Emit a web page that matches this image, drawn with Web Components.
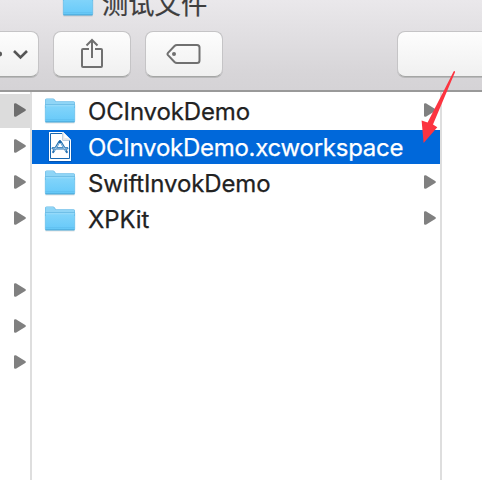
<!DOCTYPE html>
<html lang="zh-CN"><head><meta charset="utf-8"><title>Finder</title>
<style>html,body{margin:0;width:482px;height:480px;overflow:hidden;background:#fff}</style></head>
<body><finder-window></finder-window>
<script>
function define(name, html){
  const t=document.createElement('template');t.innerHTML=html;
  customElements.define(name,class extends HTMLElement{
    constructor(){super();this.attachShadow({mode:'open'}).append(t.content.cloneNode(true));}
  });
}
define('disclosure-arrow',`<style>:host{display:block;width:12px;height:14px;color:#808080}svg{display:block}</style>
<svg width="12" height="14" viewBox="0 0 12 14"><path fill="currentColor" d="M0 1.2Q0 0 1.5.2Q2.2.4 3.5 1.3L11.2 6Q12.6 7 11.2 8L3.5 12.7Q2.2 13.6 1.5 13.8Q0 14 0 12.8Z"/></svg>`);
define('folder-icon',`<style>:host{display:block;width:32px;height:26px}svg{display:block}</style>
<svg width="32" height="26" viewBox="0 0 32 26"><defs><linearGradient id="g" x2="0" y2="1"><stop stop-color="#84d5fa"/><stop offset="1" stop-color="#66c9f9"/></linearGradient></defs>
<path d="M1.5 24.9H30.5" stroke="#000" stroke-opacity=".15"/>
<path d="M1 2Q1 .4 2.6.4H9Q10 .4 10.7 1.4L12 3.2H29.5Q31 3.2 31 4.8V10H1Z" fill="#6dbbe6"/>
<path d="M1.6 2.2Q1.6 1 2.8 1H8.8Q9.6 1 10.2 1.9L11.6 3.8H29.4Q30.4 3.8 30.4 5V8H1.6Z" fill="#8fd5f6"/>
<path d="M1.3 6.9H30.7V23Q30.7 24 30 24H2Q1.3 24 1.3 23Z" fill="url(#g)" stroke="#58b5e4" stroke-width=".6"/><path d="M1.2 6.8H30.8" stroke="#68b9e2" stroke-width=".8"/><path d="M1.5 7.7H30.5" stroke="#a6e2fc" stroke-width=".8"/><path d="M1.5 21.7H30.5" stroke="#5dbbec" stroke-width=".7"/><path d="M1.3 23.9H30.7" stroke="#459fcf" stroke-width=".8"/></svg>`);
define('workspace-icon',`<style>:host{display:block;width:32px;height:32px}svg{display:block}</style>
<svg width="32" height="32" viewBox="0 0 32 32"><path d="M4.5 2H19.5L27.5 10V31H4.5Z" fill="#0b3f83" opacity=".5"/><path d="M5 1H19L27 9V30H5Z" fill="#fff"/>
<path d="M6.5 2.5H18.6V9H25.5V27.5H6.5Z" fill="none" stroke="#1767b1"/><path d="M18.2 1H19L27 9V9.4H18.2Z" fill="#e8e8e8"/><path d="M19 1Q21 4.4 20.4 7.3Q24 6.5 27 9Z" fill="#fff"/>
<g fill="none" stroke="#2873b2" stroke-linecap="round"><path d="M15.3 10.8L9.2 21M16.7 10.8L22.8 21" stroke-width="2.2"/><path d="M9 17.2H23" stroke-width="2.6"/></g><g fill="none" stroke="#b9d9f0" stroke-width=".8"><path d="M15 12L10 20M17 12L22 20M8.6 17.2H23.4"/></g><path d="M16 9V12" stroke="#1d65a6" stroke-width="1.5"/></svg>`);
define('tool-button',`<style>:host{display:flex;box-sizing:border-box;width:78px;height:46px;border:1px solid #c5c4c6;border-bottom-color:#a5a6a5;border-radius:8px;background:linear-gradient(#fdfdfd,#f0f0f0);box-shadow:0 1px 0 #b9b9ba;align-items:center;justify-content:center;flex:none}::slotted(svg){display:block}</style><slot></slot>`);
define('window-toolbar',`<style>:host{display:block;height:92px;box-sizing:border-box;overflow:hidden;background:linear-gradient(#eae8eb,#d7d5d8 82%,#d5d3d6);border-bottom:2px solid #999}
.title{display:flex;height:31px;padding-left:62px}.title folder-icon{margin-top:-9px}.title span{margin:-13px 0 0 8px;font:26.3px/32px "Noto Sans CJK SC",sans-serif;color:#3e3e3e;-webkit-text-stroke:.2px}
.tools{display:flex;gap:14px}.back{width:79px;margin-left:-40px}.search{width:100px;margin-left:160px}
</style><div class="title"><folder-icon></folder-icon><span>测试文件</span></div><div class="tools">
<tool-button class="back"><svg width="77" height="44" viewBox="0 0 77 44"><circle cx="38.7" cy="22" r="2.4" fill="#5a5a5a"/><path d="M53 19L59.5 25.5L66 19" fill="none" stroke="#555" stroke-width="2.6"/></svg></tool-button>
<tool-button><svg width="24" height="32" viewBox="0 0 24 32" fill="none" stroke="#707070" stroke-width="2"><path d="M9 11H3Q2 11 2 12V28Q2 29 3 29H21Q22 29 22 28V12Q22 11 21 11H15M12 20V1.5M6.5 7.5L12 2L17.5 7.5"/></svg></tool-button>
<tool-button><svg width="36" height="22" viewBox="0 0 36 22" fill="none" stroke="#707070" stroke-width="2"><path d="M11 2H31Q33.5 2 33.5 4.5V17.5Q33.5 20 31 20H11Q9.5 20 8.5 19L2 12.2Q1 11 2 9.8L8.5 3Q9.5 2 11 2Z"/><circle cx="8" cy="11" r="2" fill="#707070" stroke="none"/></svg></tool-button>
<tool-button class="search"></tool-button></div>`);
define('file-row',`<style>:host{display:flex;align-items:center;height:34px;box-sizing:border-box;padding:0 4px 0 12px;color:#222;font:24px/34px Inter,sans-serif;--tracking:-.14px}
:host([selected]){background:#0068da;color:#fff;--tracking:-.26px}.label{margin:2px 0 0 12px;flex:1;white-space:nowrap;letter-spacing:var(--tracking);-webkit-text-stroke:.25px}disclosure-arrow{margin-top:-2px}:host([selected]) disclosure-arrow{visibility:hidden}</style>
<slot name="icon"></slot><span class="label"><slot></slot></span><disclosure-arrow></disclosure-arrow>`);
define('parent-row',`<style>:host{display:flex;height:34px;align-items:center;padding-left:14px}:host([active]){background:#dcdcdc}:host([active]) disclosure-arrow{color:#6e6e6e}:host([empty]) disclosure-arrow{visibility:hidden}disclosure-arrow{margin-top:-2px}</style><disclosure-arrow></disclosure-arrow>`);
define('file-column',`<style>:host{display:flex;flex-direction:column;gap:2px;padding-top:2px;border-right:2px solid #dedede;box-sizing:border-box}</style><slot></slot>`);
define('pointer-arrow',`<style>:host{display:block;position:absolute;left:420px;top:68px;width:40px;height:78px}</style><svg width="40" height="78" viewBox="0 0 40 78"><path fill="#fc3440" d="M33.6 3.4Q34.8 2.5 35.1 4L13 56.4L17.3 59.2L3.6 75L1.6 52.6L7.6 54.5Z"/></svg>`);
define('finder-window',`<style>:host{display:block;position:relative;width:482px;height:480px;overflow:hidden;background:#fff}.cols{display:grid;grid-template-columns:32px 410px 1fr;height:388px}</style>
<window-toolbar></window-toolbar><div class="cols"><file-column><parent-row active></parent-row><parent-row></parent-row><parent-row></parent-row><parent-row></parent-row><parent-row empty></parent-row><parent-row></parent-row><parent-row></parent-row><parent-row></parent-row></file-column>
<file-column><file-row><folder-icon slot="icon"></folder-icon>OCInvokDemo</file-row><file-row selected><workspace-icon slot="icon"></workspace-icon>OCInvokDemo.xcworkspace</file-row><file-row><folder-icon slot="icon"></folder-icon>SwiftInvokDemo</file-row><file-row><folder-icon slot="icon"></folder-icon>XPKit</file-row></file-column></div><pointer-arrow></pointer-arrow>`);
</script></body></html>
